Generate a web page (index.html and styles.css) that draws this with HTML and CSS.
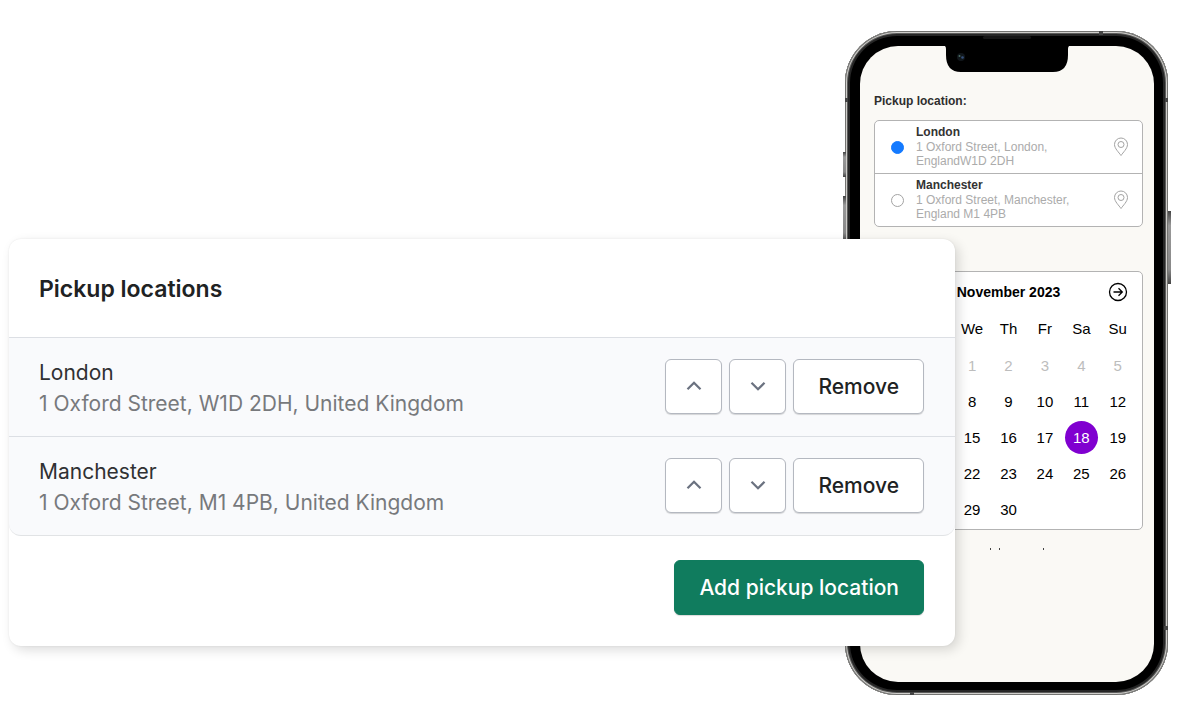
FILE: index.html
```
<!DOCTYPE html>
<html lang="en">
  <head>
    <meta charset="UTF-8" />
    <meta name="viewport" content="width=device-width, initial-scale=1.0" />
    <title>Pickup locations</title>
    <link rel="stylesheet" href="styles.css">
  </head>
  <body>
    <main class="stage">
      <section class="phone">
        <span class="side-btn volume-up"></span>
        <span class="side-btn volume-down"></span>
        <span class="side-btn power"></span>
        <span class="antenna antenna-top"></span>
        <span class="antenna antenna-left"></span>
        <span class="antenna antenna-right"></span>
        <span class="antenna antenna-right-low"></span>
        <span class="antenna antenna-bottom"></span>
        <span class="speaker"></span>

        <div class="screen">
          <svg class="notch" viewBox="0 0 130 27" aria-hidden="true">
            <path d="M0 0h130q-4 0-4 4v6q0 17-15 17H19Q4 27 4 10V4q0-4-4-4z" fill="#000" />
            <circle cx="19" cy="12" r="4" fill="#10161a" />
            <circle cx="17.500" cy="11" r="1" fill="#4e6f68" />
            <circle cx="20.500" cy="12.500" r="1.300" fill="#35507c" />
          </svg>

          <fieldset class="pickup">
            <legend>Pickup location:</legend>
            <div class="options">
              <label class="option">
                <input type="radio" name="location" checked />
                <span class="option-text">
                  <strong>London</strong>
                  <span>1 Oxford Street, London, EnglandW1D 2DH</span>
                </span>
                <svg class="pin" viewBox="0 0 16 20" aria-hidden="true">
                  <path d="M8 18.500C6 15.500 1.500 11.500 1.500 7.500a6.500 6.500 0 0 1 13 0c0 4-4.500 8-6.500 11z" />
                  <circle cx="8" cy="7.500" r="3" />
                </svg>
              </label>
              <label class="option">
                <input type="radio" name="location" />
                <span class="option-text">
                  <strong>Manchester</strong>
                  <span>1 Oxford Street, Manchester, England M1 4PB</span>
                </span>
                <svg class="pin" viewBox="0 0 16 20" aria-hidden="true">
                  <path d="M8 18.500C6 15.500 1.500 11.500 1.500 7.500a6.500 6.500 0 0 1 13 0c0 4-4.500 8-6.500 11z" />
                  <circle cx="8" cy="7.500" r="3" />
                </svg>
              </label>
            </div>
          </fieldset>

          <div class="calendar">
            <div class="calendar-head">
              <h3>November 2023</h3>
              <button class="next" type="button" aria-label="Next month">
                <svg viewBox="0 0 20 20" aria-hidden="true">
                  <circle cx="10" cy="10" r="8.500" />
                  <path d="M5.500 10h8.500M10.500 6.200L14.300 10l-3.800 3.800" />
                </svg>
              </button>
            </div>
            <table>
              <thead>
                <tr><th></th><th></th><th>We</th><th>Th</th><th>Fr</th><th>Sa</th><th>Su</th></tr>
              </thead>
              <tbody>
                <tr class="past"><td></td><td></td><td>1</td><td>2</td><td>3</td><td>4</td><td>5</td></tr>
                <tr><td></td><td></td><td>8</td><td>9</td><td>10</td><td>11</td><td>12</td></tr>
                <tr><td></td><td></td><td>15</td><td>16</td><td>17</td><td><span class="selected">18</span></td><td>19</td></tr>
                <tr><td></td><td></td><td>22</td><td>23</td><td>24</td><td>25</td><td>26</td></tr>
                <tr><td></td><td></td><td>29</td><td>30</td><td></td><td></td><td></td></tr>
              </tbody>
            </table>
          </div>

          <svg class="specks" viewBox="0 0 60 2" aria-hidden="true">
            <path d="M0 0h1v2H0zM9 0h1v2H9zM53 0h1v2h-1z" />
          </svg>
        </div>
      </section>

      <section class="card">
        <h2>Pickup locations</h2>
        <ul class="locations">
          <li>
            <div class="place">
              <h3>London</h3>
              <p>1 Oxford Street, W1D 2DH, United Kingdom</p>
            </div>
            <div class="actions">
              <button class="btn btn-icon" type="button" aria-label="Move London up">
                <svg viewBox="0 0 16 10" aria-hidden="true"><path d="M1.500 8.200L8 1.800l6.500 6.400" /></svg>
              </button>
              <button class="btn btn-icon" type="button" aria-label="Move London down">
                <svg viewBox="0 0 16 10" aria-hidden="true"><path d="M1.500 1.800L8 8.200l6.500-6.400" /></svg>
              </button>
              <button class="btn" type="button">Remove</button>
            </div>
          </li>
          <li>
            <div class="place">
              <h3>Manchester</h3>
              <p>1 Oxford Street, M1 4PB, United Kingdom</p>
            </div>
            <div class="actions">
              <button class="btn btn-icon" type="button" aria-label="Move Manchester up">
                <svg viewBox="0 0 16 10" aria-hidden="true"><path d="M1.500 8.200L8 1.800l6.500 6.400" /></svg>
              </button>
              <button class="btn btn-icon" type="button" aria-label="Move Manchester down">
                <svg viewBox="0 0 16 10" aria-hidden="true"><path d="M1.500 1.800L8 8.200l6.500-6.400" /></svg>
              </button>
              <button class="btn" type="button">Remove</button>
            </div>
          </li>
        </ul>
        <div class="card-foot">
          <button class="btn btn-primary" type="button">Add pickup location</button>
        </div>
      </section>
    </main>
  </body>
</html>
```

FILE: styles.css
```
* {
  box-sizing: border-box;
}
body {
  margin: 0;
  background: #fff;
  font-family: "Liberation Sans", Arial, sans-serif;
}
h2,
h3,
p,
ul {
  margin: 0;
  padding: 0;
}
/* the card and the phone share the middle column */
.stage {
  display: grid;
  grid-template-columns: 1fr 110px 213px;
  align-items: center;
  padding: 31px 32px 32px 9px;
}

/* Phone */
.phone {
  grid-column: 2 / 4;
  grid-row: 1;
  position: relative;
  display: flex;
  padding: 15px 14px 13px 15px;
  border-radius: 52px;
  background: #000;
  box-shadow: inset 0 0 0 1px #747472, inset 0 0 0 2px #cfcecb,
    inset 0 0 0 3px #5c5c5b, inset 0 0 0 5px #262626;
}
.screen {
  flex: 1;
  position: relative;
  min-height: 636px;
  padding: 48px 11px 0 14px;
  border-radius: 38px;
  background: #faf9f5;
}
.notch {
  position: absolute;
  top: -1px;
  left: 82px;
  width: 130px;
  height: 27px;
}
.side-btn,
.antenna,
.speaker {
  position: absolute;
}
.side-btn {
  width: 3px;
  background: linear-gradient(#444, #999 20%, #888 80%, #444);
}
.volume-up {
  left: -2px;
  top: 121px;
  height: 25px;
}
.volume-down {
  left: -2px;
  top: 165px;
  height: 46px;
}
.power {
  right: -3px;
  top: 180px;
  height: 73px;
}
.antenna {
  background: #444;
}
.antenna-top {
  top: 0;
  right: 65px;
  width: 4px;
  height: 4px;
}
.antenna-left {
  top: 67px;
  left: 0;
  width: 3px;
  height: 4px;
}
.antenna-right {
  top: 67px;
  right: 0;
  width: 3px;
  height: 4px;
}
.antenna-right-low {
  bottom: 65px;
  right: 0;
  width: 4px;
  height: 4px;
}
.antenna-bottom {
  bottom: 0;
  left: 65px;
  width: 4px;
  height: 3px;
}
.speaker {
  top: 5px;
  left: 138px;
  width: 48px;
  height: 3px;
  border-radius: 2px;
  background: #161616;
}

/* Pickup options */
.pickup {
  margin: 0;
  padding: 0;
  border: 0;
  min-width: 0;
}
.pickup legend {
  padding: 0;
  margin-bottom: 12px;
  font-size: 12px;
  line-height: 14px;
  font-weight: bold;
  color: #2e2e2e;
}
.options,
.calendar {
  border: 1px solid #b3b3b3;
  border-radius: 5px;
  background: #fff;
}
.option {
  display: flex;
  align-items: center;
  height: 52px;
  padding: 0 13px 0 16px;
}
.option + .option {
  height: 53px;
  border-top: 1px solid #b3b3b3;
}
.option input {
  appearance: none;
  flex: none;
  width: 13px;
  height: 13px;
  margin: 0 12px 0 0;
  border: 1px solid #a3a3a3;
  border-radius: 50%;
}
.option input:checked {
  border-color: #147aff;
  background: #147aff;
}
.option-text {
  width: 170px;
  padding-bottom: 2px;
  font-size: 12px;
  line-height: 14px;
  color: #ababab;
}
.option-text strong {
  display: block;
  line-height: 16px;
  font-weight: bold;
  color: #333;
}
.option-text span {
  display: block;
}
.pin {
  width: 16px;
  height: 20px;
  margin-left: auto;
  fill: none;
  stroke: #a3a3a3;
}

/* Calendar */
.calendar {
  margin-top: 44px;
  padding: 0 6px 2px;
}
.calendar-head {
  position: relative;
  display: flex;
  align-items: center;
  justify-content: center;
  height: 38px;
  padding-top: 2px;
}
.calendar-head h3 {
  font-size: 14px;
}
.next {
  position: absolute;
  right: 8px;
  width: 20px;
  height: 20px;
  padding: 0;
  border: 0;
  background: none;
}
.next svg {
  display: block;
  fill: none;
  stroke: #000;
  stroke-width: 1.3;
}
.calendar table {
  width: 100%;
  table-layout: fixed;
  border-collapse: collapse;
  font-size: 15px;
  color: #000;
}
.calendar th,
.calendar td {
  height: 36px;
  padding: 0;
  font-weight: normal;
  text-align: center;
}
.calendar th {
  height: 37px;
}
.calendar .past {
  color: #bdbdbd;
}
.selected {
  display: block;
  width: 33px;
  margin: 0 auto;
  border-radius: 50%;
  line-height: 33px;
  background: #8000d0;
  color: #fff;
}
.specks {
  display: block;
  width: 60px;
  height: 2px;
  margin: 18px 0 0 116px;
  fill: #444;
}

/* Card */
.card {
  grid-column: 1 / 3;
  grid-row: 1;
  align-self: start;
  position: relative;
  margin-top: 208px;
  border-radius: 12px;
  background: #fff;
  box-shadow: 4px 4px 12px rgba(0, 0, 0, 0.14), 0 0 2px rgba(0, 0, 0, 0.08);
  font-family: Inter, sans-serif;
  font-size: 21px;
}
.card h2 {
  padding: 35px 30px 33px;
  font-size: 23px;
  line-height: 30px;
  font-weight: 600;
  color: #202223;
}
.locations {
  list-style: none;
  border-bottom: 1px solid #e1e3e5;
  border-radius: 0 0 12px 12px;
  background: #f9fafc;
}
.locations li {
  display: flex;
  align-items: center;
  justify-content: space-between;
  height: 99px;
  padding: 0 31px 2px 30px;
  border-top: 1px solid #dcdfe4;
}
.place {
  padding-top: 4px;
  line-height: 31px;
}
.place h3 {
  font-size: 21px;
  font-weight: 400;
  color: #303133;
}
.place p {
  color: #77797c;
}
.actions {
  display: flex;
  gap: 7px;
}
.btn {
  height: 55px;
  padding: 0 24px;
  border: 1px solid #b4b8c0;
  border-radius: 6px;
  background: #fff;
  box-shadow: 0 1px 1px rgba(0, 0, 0, 0.15);
  font-family: inherit;
  font-size: 21px;
  font-weight: 500;
  color: #202223;
}
.btn-icon {
  display: flex;
  align-items: center;
  justify-content: center;
  width: 57px;
  padding: 0;
}
.btn-icon svg {
  width: 16px;
  height: 10px;
  fill: none;
  stroke: #6b7280;
  stroke-width: 2.3;
}
.card-foot {
  display: flex;
  justify-content: flex-end;
  padding: 24px 31px 31px;
}
.btn-primary {
  border-color: #107c5e;
  background: #107c5e;
  color: #fff;
}
```
